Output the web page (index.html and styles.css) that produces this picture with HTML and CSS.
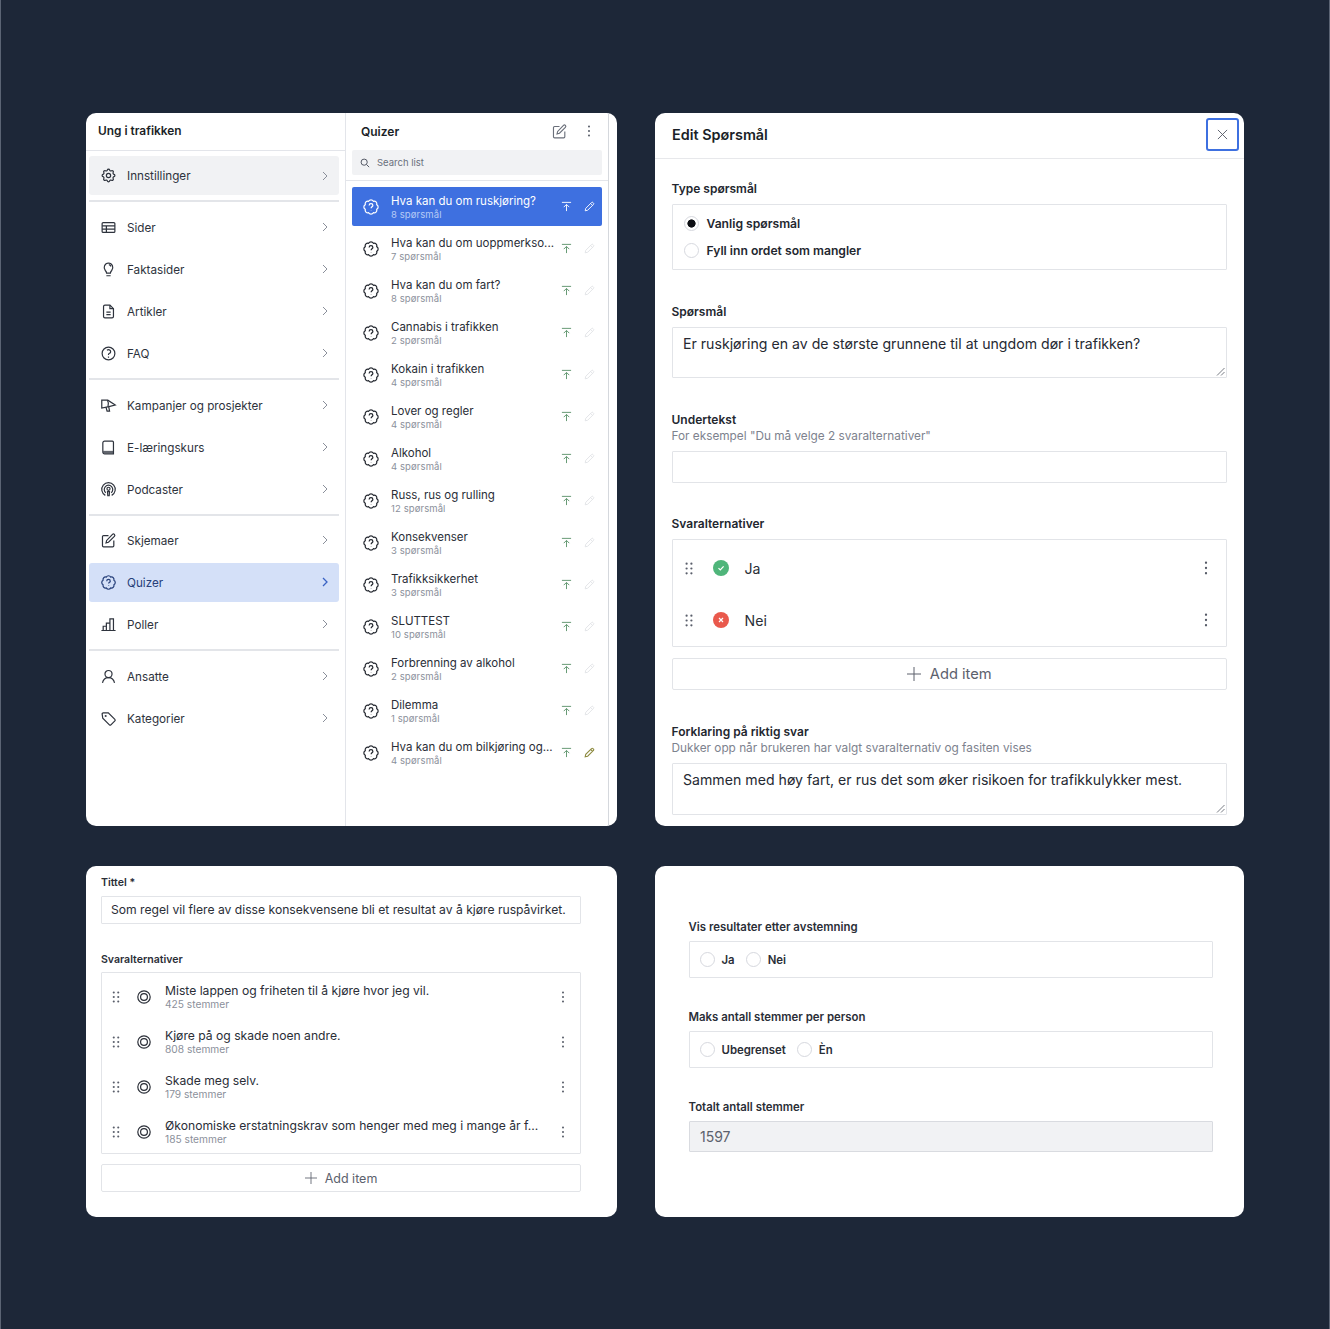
FILE: index.html
```html
<!DOCTYPE html>
<html lang="no">
<head>
<meta charset="utf-8">
<title>Ung i trafikken</title>
<link rel="stylesheet" href="styles.css">
</head>
<body>
<svg class="defs" width="0" height="0" aria-hidden="true">
<symbol id="i-cog" viewBox="0 0 24 24"><path d="M10.325 4.317c.426-1.756 2.924-1.756 3.350 0a1.724 1.724 0 002.573 1.066c1.543-.94 3.310.826 2.370 2.370a1.724 1.724 0 001.065 2.572c1.756.426 1.756 2.924 0 3.350a1.724 1.724 0 00-1.066 2.573c.94 1.543-.826 3.310-2.370 2.370a1.724 1.724 0 00-2.572 1.065c-.426 1.756-2.924 1.756-3.350 0a1.724 1.724 0 00-2.573-1.066c-1.543.94-3.310-.826-2.370-2.370a1.724 1.724 0 00-1.065-2.572c-1.756-.426-1.756-2.924 0-3.350a1.724 1.724 0 001.066-2.573c-.94-1.543.826-3.310 2.370-2.370.996.608 2.296.07 2.572-1.065z"/><circle cx="12" cy="12" r="3"/></symbol>
<symbol id="i-table" viewBox="0 0 24 24"><rect x="3" y="5" width="18" height="14" rx="1.5"/><path d="M3 9.7h18M3 14.3h18M9 9.7V19"/></symbol>
<symbol id="i-bulb" viewBox="0 0 24 24"><path d="M9.3 17.2c0-1.600-.7-2.600-1.800-3.800A6.400 6.400 0 0112 2.800a6.400 6.400 0 014.500 10.600c-1.100 1.200-1.800 2.200-1.800 3.800z"/><path d="M9 20.800h6M12.500 5.200a3.600 3.600 0 013 2.600"/></symbol>
<symbol id="i-doc" viewBox="0 0 24 24"><path d="M14 3H7a2 2 0 00-2 2v14a2 2 0 002 2h10a2 2 0 002-2V8z"/><path d="M14 3v5h5M9 13h6M9 16.500h6"/></symbol>
<symbol id="i-q" viewBox="0 0 24 24"><path d="M9.879 7.519c1.171-1.025 3.071-1.025 4.242 0 1.172 1.025 1.172 2.687 0 3.712-.203.179-.43.326-.67.442-.745.361-1.45.999-1.45 1.827v.75M21 12a9 9 0 11-18 0 9 9 0 0118 0zm-9 5.250h.008v.008H12v-.008z"/></symbol>
<symbol id="i-mega" viewBox="0 0 24 24"><path d="M2.500 4.500h8.500l10.500 6.800-9 2.200-10 2z"/><path d="M8.500 14.500l1.500 5.500h3.500l-1.200-6.300"/><path d="M10.500 4.500c1.500 2.500 1.800 6.300.8 9.300"/></symbol>
<symbol id="i-book" viewBox="0 0 24 24"><path d="M6.500 3h11A1.500 1.500 0 0119 4.500V21H6.500A2.500 2.500 0 014 18.500v-13A2.500 2.500 0 016.500 3z"/><path d="M4.500 18.500h14.500" stroke-width="3.500" opacity=".75"/></symbol>
<symbol id="i-pod" viewBox="0 0 24 24"><path d="M7.500 20.300a9.500 9.500 0 119 0"/><path d="M8.200 16.600a6 6 0 117.600 0"/><circle cx="12" cy="11" r="2.200"/><path d="M10.600 15h2.800l-.4 5.800h-2z"/></symbol>
<symbol id="i-edit" viewBox="0 0 24 24"><path d="M12 5H5a1.500 1.500 0 00-1.500 1.500v13A1.500 1.500 0 005 21h13a1.500 1.500 0 001.500-1.500V12"/><path d="M17.600 3.400a1.900 1.900 0 012.700 2.700L12 14.500l-3.500.9.900-3.500z"/></symbol>
<symbol id="i-bars" viewBox="0 0 24 24"><path d="M2 20.500h20M4.500 20.500v-6h4.500v6M9 20.500V10h5v10.500M14 20.500V4h5v16.500"/></symbol>
<symbol id="i-user" viewBox="0 0 24 24"><circle cx="12" cy="8.500" r="5"/><path d="M3.500 21c.8-4 4-7.500 8.500-7.500s7.700 3.500 8.500 7.500"/></symbol>
<symbol id="i-tag" viewBox="0 0 24 24"><path d="M3 5.500A1.500 1.500 0 014.500 4h7.200l9.300 9.300a1.500 1.500 0 010 2.100l-5.600 5.600a1.500 1.500 0 01-2.100 0L3.900 11.600z"/><circle cx="8" cy="8.500" r=".6"/></symbol>
<symbol id="i-chev" viewBox="0 0 8 12"><path d="M2 2l4 4-4 4"/></symbol>
<symbol id="i-quiz" viewBox="0 0 24 24"><path stroke-linejoin="round" d="M19.580 8.860A3.500 3.500 0 0119.580 15.140 3.500 3.500 0 0115.140 19.580 3.500 3.500 0 018.860 19.580 3.500 3.500 0 014.420 15.140 3.500 3.500 0 014.420 8.860 3.500 3.500 0 018.860 4.420 3.500 3.500 0 0115.140 4.420 3.500 3.500 0 0119.580 8.860z"/><path d="M9.500 10.100a2.500 2.500 0 115 0c0 1.700-2.300 1.700-2.300 3.400M12.200 16.400v.4"/></symbol>
<symbol id="i-top" viewBox="0 0 12 12"><path d="M1 1.500h10M6 11V4M3 6.700L6 3.700l3 3"/></symbol>
<symbol id="i-pen" viewBox="0 0 12 12"><path d="M8.200 1.700a1.100 1.100 0 011.600 0l.5.500a1.100 1.100 0 010 1.600L4 10.100 1.300 10.700 1.900 8zM7.200 2.700l2.100 2.100"/></symbol>
<symbol id="i-search" viewBox="0 0 12 12"><circle cx="5" cy="5" r="3.700"/><path d="M7.800 7.800L11 11"/></symbol>
<symbol id="i-dots" viewBox="0 0 4 16"><circle cx="2" cy="2" r="1.300"/><circle cx="2" cy="8" r="1.300"/><circle cx="2" cy="14" r="1.300"/></symbol>
<symbol id="i-grip" viewBox="0 0 10 16"><circle cx="2" cy="2" r="1.400"/><circle cx="8" cy="2" r="1.400"/><circle cx="2" cy="8" r="1.400"/><circle cx="8" cy="8" r="1.400"/><circle cx="2" cy="14" r="1.400"/><circle cx="8" cy="14" r="1.400"/></symbol>
<symbol id="i-target" viewBox="0 0 14 14"><circle cx="7" cy="7" r="6.200"/><circle cx="7" cy="7" r="3.400"/></symbol>
<symbol id="i-plus" viewBox="0 0 14 14"><path d="M7 0v14M0 7h14"/></symbol>
<symbol id="i-close" viewBox="0 0 12 12"><path d="M1 1l10 10M11 1L1 11"/></symbol>
<symbol id="i-grab" viewBox="0 0 9 9"><path d="M8.500 1L1 8.500M8.500 5L5 8.500"/></symbol>
</svg>

<main class="board">

<section class="card studio">
  <nav class="side">
    <h2 class="pane-title">Ung i trafikken</h2>
    <div class="group group-first">
      <a class="nav nav-muted"><svg class="ico"><use href="#i-cog"/></svg><span>Innstillinger</span><svg class="chev"><use href="#i-chev"/></svg></a>
    </div>
    <div class="group">
      <a class="nav"><svg class="ico"><use href="#i-table"/></svg><span>Sider</span><svg class="chev"><use href="#i-chev"/></svg></a>
      <a class="nav"><svg class="ico"><use href="#i-bulb"/></svg><span>Faktasider</span><svg class="chev"><use href="#i-chev"/></svg></a>
      <a class="nav"><svg class="ico"><use href="#i-doc"/></svg><span>Artikler</span><svg class="chev"><use href="#i-chev"/></svg></a>
      <a class="nav"><svg class="ico"><use href="#i-q"/></svg><span>FAQ</span><svg class="chev"><use href="#i-chev"/></svg></a>
    </div>
    <div class="group group-tight">
      <a class="nav"><svg class="ico"><use href="#i-mega"/></svg><span>Kampanjer og prosjekter</span><svg class="chev"><use href="#i-chev"/></svg></a>
      <a class="nav"><svg class="ico"><use href="#i-book"/></svg><span>E-læringskurs</span><svg class="chev"><use href="#i-chev"/></svg></a>
      <a class="nav"><svg class="ico"><use href="#i-pod"/></svg><span>Podcaster</span><svg class="chev"><use href="#i-chev"/></svg></a>
    </div>
    <div class="group">
      <a class="nav"><svg class="ico"><use href="#i-edit"/></svg><span>Skjemaer</span><svg class="chev"><use href="#i-chev"/></svg></a>
      <a class="nav nav-active"><svg class="ico"><use href="#i-quiz"/></svg><span>Quizer</span><svg class="chev"><use href="#i-chev"/></svg></a>
      <a class="nav"><svg class="ico"><use href="#i-bars"/></svg><span>Poller</span><svg class="chev"><use href="#i-chev"/></svg></a>
    </div>
    <div class="group group-last">
      <a class="nav"><svg class="ico"><use href="#i-user"/></svg><span>Ansatte</span><svg class="chev"><use href="#i-chev"/></svg></a>
      <a class="nav"><svg class="ico"><use href="#i-tag"/></svg><span>Kategorier</span><svg class="chev"><use href="#i-chev"/></svg></a>
    </div>
  </nav>
  <div class="quizzes">
    <header class="list-head">
      <h2 class="pane-title-2">Quizer</h2>
      <svg class="head-edit"><use href="#i-edit"/></svg>
      <svg class="head-dots"><use href="#i-dots"/></svg>
    </header>
    <div class="search-wrap"><div class="search"><svg class="search-ico"><use href="#i-search"/></svg><span>Search list</span></div></div>
    <ul class="qlist">
      <li class="q q-on"><svg class="q-ico"><use href="#i-quiz"/></svg><div class="q-text"><div class="q-t">Hva kan du om ruskjøring?</div><div class="q-s">8 spørsmål</div></div><svg class="q-top"><use href="#i-top"/></svg><svg class="q-pen"><use href="#i-pen"/></svg></li>
      <li class="q"><svg class="q-ico"><use href="#i-quiz"/></svg><div class="q-text"><div class="q-t">Hva kan du om uoppmerkso...</div><div class="q-s">7 spørsmål</div></div><svg class="q-top"><use href="#i-top"/></svg><svg class="q-pen"><use href="#i-pen"/></svg></li>
      <li class="q"><svg class="q-ico"><use href="#i-quiz"/></svg><div class="q-text"><div class="q-t">Hva kan du om fart?</div><div class="q-s">8 spørsmål</div></div><svg class="q-top"><use href="#i-top"/></svg><svg class="q-pen"><use href="#i-pen"/></svg></li>
      <li class="q"><svg class="q-ico"><use href="#i-quiz"/></svg><div class="q-text"><div class="q-t">Cannabis i trafikken</div><div class="q-s">2 spørsmål</div></div><svg class="q-top"><use href="#i-top"/></svg><svg class="q-pen"><use href="#i-pen"/></svg></li>
      <li class="q"><svg class="q-ico"><use href="#i-quiz"/></svg><div class="q-text"><div class="q-t">Kokain i trafikken</div><div class="q-s">4 spørsmål</div></div><svg class="q-top"><use href="#i-top"/></svg><svg class="q-pen"><use href="#i-pen"/></svg></li>
      <li class="q"><svg class="q-ico"><use href="#i-quiz"/></svg><div class="q-text"><div class="q-t">Lover og regler</div><div class="q-s">4 spørsmål</div></div><svg class="q-top"><use href="#i-top"/></svg><svg class="q-pen"><use href="#i-pen"/></svg></li>
      <li class="q"><svg class="q-ico"><use href="#i-quiz"/></svg><div class="q-text"><div class="q-t">Alkohol</div><div class="q-s">4 spørsmål</div></div><svg class="q-top"><use href="#i-top"/></svg><svg class="q-pen"><use href="#i-pen"/></svg></li>
      <li class="q"><svg class="q-ico"><use href="#i-quiz"/></svg><div class="q-text"><div class="q-t">Russ, rus og rulling</div><div class="q-s">12 spørsmål</div></div><svg class="q-top"><use href="#i-top"/></svg><svg class="q-pen"><use href="#i-pen"/></svg></li>
      <li class="q"><svg class="q-ico"><use href="#i-quiz"/></svg><div class="q-text"><div class="q-t">Konsekvenser</div><div class="q-s">3 spørsmål</div></div><svg class="q-top"><use href="#i-top"/></svg><svg class="q-pen"><use href="#i-pen"/></svg></li>
      <li class="q"><svg class="q-ico"><use href="#i-quiz"/></svg><div class="q-text"><div class="q-t">Trafikksikkerhet</div><div class="q-s">3 spørsmål</div></div><svg class="q-top"><use href="#i-top"/></svg><svg class="q-pen"><use href="#i-pen"/></svg></li>
      <li class="q"><svg class="q-ico"><use href="#i-quiz"/></svg><div class="q-text"><div class="q-t">SLUTTEST</div><div class="q-s">10 spørsmål</div></div><svg class="q-top"><use href="#i-top"/></svg><svg class="q-pen"><use href="#i-pen"/></svg></li>
      <li class="q"><svg class="q-ico"><use href="#i-quiz"/></svg><div class="q-text"><div class="q-t">Forbrenning av alkohol</div><div class="q-s">2 spørsmål</div></div><svg class="q-top"><use href="#i-top"/></svg><svg class="q-pen"><use href="#i-pen"/></svg></li>
      <li class="q"><svg class="q-ico"><use href="#i-quiz"/></svg><div class="q-text"><div class="q-t">Dilemma</div><div class="q-s">1 spørsmål</div></div><svg class="q-top"><use href="#i-top"/></svg><svg class="q-pen"><use href="#i-pen"/></svg></li>
      <li class="q q-draft"><svg class="q-ico"><use href="#i-quiz"/></svg><div class="q-text"><div class="q-t">Hva kan du om bilkjøring og...</div><div class="q-s">4 spørsmål</div></div><svg class="q-top"><use href="#i-top"/></svg><svg class="q-pen"><use href="#i-pen"/></svg></li>
    </ul>
  </div>
  <div class="scroll-track"></div>
</section>

<section class="card edit">
  <header class="edit-head">
    <h1>Edit Spørsmål</h1>
    <button class="close"><svg><use href="#i-close"/></svg></button>
  </header>
  <div class="edit-body">
    <div class="lab lab-type">Type spørsmål</div>
    <div class="box type-box">
      <label class="radio-row"><span class="radio radio-on"></span>Vanlig spørsmål</label>
      <label class="radio-row"><span class="radio"></span>Fyll inn ordet som mangler</label>
    </div>
    <div class="lab lab-q">Spørsmål</div>
    <div class="box area area-q">Er ruskjøring en av de største grunnene til at ungdom dør i trafikken?<svg class="grab"><use href="#i-grab"/></svg></div>
    <div class="lab lab-u">Undertekst</div>
    <div class="hint">For eksempel "Du må velge 2 svaralternativer"</div>
    <div class="box empty-input"></div>
    <div class="lab lab-s">Svaralternativer</div>
    <div class="box answers">
      <div class="ans"><svg class="grip"><use href="#i-grip"/></svg><span class="mark mark-yes"><svg viewBox="0 0 10 10"><path d="M2.500 5.200l1.800 1.800 3.300-3.700"/></svg></span><span class="ans-t">Ja</span><svg class="dots"><use href="#i-dots"/></svg></div>
      <div class="ans"><svg class="grip"><use href="#i-grip"/></svg><span class="mark mark-no"><svg viewBox="0 0 10 10"><path d="M3 3l4 4M7 3L3 7"/></svg></span><span class="ans-t">Nei</span><svg class="dots"><use href="#i-dots"/></svg></div>
    </div>
    <div class="add add-lg"><svg><use href="#i-plus"/></svg>Add item</div>
    <div class="lab lab-f">Forklaring på riktig svar</div>
    <div class="hint">Dukker opp når brukeren har valgt svaralternativ og fasiten vises</div>
    <div class="box area area-f">Sammen med høy fart, er rus det som øker risikoen for trafikkulykker mest.<svg class="grab"><use href="#i-grab"/></svg></div>
  </div>
</section>

<section class="card poll">
  <div class="lab-sm">Tittel *</div>
  <div class="box poll-input">Som regel vil flere av disse konsekvensene bli et resultat av å kjøre ruspåvirket.</div>
  <div class="lab-sm lab-poll">Svaralternativer</div>
  <div class="box poll-list">
    <div class="pa"><svg class="pa-grip"><use href="#i-grip"/></svg><svg class="pa-target"><use href="#i-target"/></svg><div class="pa-text"><div class="pa-t">Miste lappen og friheten til å kjøre hvor jeg vil.</div><div class="pa-s">425 stemmer</div></div><svg class="pa-dots"><use href="#i-dots"/></svg></div>
    <div class="pa"><svg class="pa-grip"><use href="#i-grip"/></svg><svg class="pa-target"><use href="#i-target"/></svg><div class="pa-text"><div class="pa-t">Kjøre på og skade noen andre.</div><div class="pa-s">808 stemmer</div></div><svg class="pa-dots"><use href="#i-dots"/></svg></div>
    <div class="pa"><svg class="pa-grip"><use href="#i-grip"/></svg><svg class="pa-target"><use href="#i-target"/></svg><div class="pa-text"><div class="pa-t">Skade meg selv.</div><div class="pa-s">179 stemmer</div></div><svg class="pa-dots"><use href="#i-dots"/></svg></div>
    <div class="pa"><svg class="pa-grip"><use href="#i-grip"/></svg><svg class="pa-target"><use href="#i-target"/></svg><div class="pa-text"><div class="pa-t">Økonomiske erstatningskrav som henger med meg i mange år f...</div><div class="pa-s">185 stemmer</div></div><svg class="pa-dots"><use href="#i-dots"/></svg></div>
  </div>
  <div class="add add-sm"><svg><use href="#i-plus"/></svg>Add item</div>
</section>

<section class="card settings">
  <div class="lab-sm set-lab set-lab-1">Vis resultater etter avstemning</div>
  <div class="box set-box">
    <label class="set-radio"><span class="radio"></span>Ja</label>
    <label class="set-radio"><span class="radio"></span>Nei</label>
  </div>
  <div class="lab-sm set-lab set-lab-2">Maks antall stemmer per person</div>
  <div class="box set-box">
    <label class="set-radio"><span class="radio"></span>Ubegrenset</label>
    <label class="set-radio"><span class="radio"></span>Èn</label>
  </div>
  <div class="lab-sm set-lab set-lab-2">Totalt antall stemmer</div>
  <div class="box set-total">1597</div>
</section>

</main>
</body>
</html>
```

FILE: styles.css
```css
* { box-sizing: border-box; }
html, body { margin: 0; padding: 0; }
body {
  background: #1d2738;
  font-family: Inter, "Liberation Sans", sans-serif;
  color: #1b1f27;
  min-height: 1329px;
  border-left: 1px solid #5b6474;
  border-right: 1px solid #5b6474;
  -webkit-font-smoothing: antialiased;
}
.defs { position: absolute; }
svg { fill: none; stroke: currentColor; flex: none; display: block; }

.board {
  display: grid;
  grid-template-columns: 531px 589px;
  grid-template-rows: 713px 351px;
  column-gap: 38px;
  row-gap: 40px;
  padding: 113px 0 0 85px;
}
.card { background: #fff; border-radius: 10px; overflow: hidden; }

/* first card */
.studio { display: flex; }
.side { width: 260px; border-right: 1px solid #e3e5ea; padding: 0 6px 0 3px; flex: none; }
.pane-title {
  margin: 0 -6px 0 -3px;
  height: 38px;
  padding: 0 12px;
  font-size: 11.900px;
  font-weight: 600;
  line-height: 36px;
  border-bottom: 1px solid #e3e5ea;
}
.group { border-bottom: 2px solid #e3e5e9; padding: 0 0 4px; margin-bottom: 4px; }
.group-first { padding: 5px 0 5px; margin-bottom: 4px; }
.group-tight { margin-bottom: 3px; }
.group-last { border-bottom: 0; }
.group:not(.group-first) { padding-top: 0; }
.nav {
  display: flex;
  align-items: center;
  height: 42px;
  padding: 0 10px 0 11px;
  font-size: 11.700px;
  color: #2e333d;
  border-radius: 3px;
}
.nav-muted { height: 39px; background: #f1f2f4; }
.nav-active { height: 39px; margin: 1.500px 0; background: #d4e0f8; color: #27407a; }
.ico { width: 17px; height: 17px; stroke-width: 1.700; margin-right: 10px; }
.nav span { flex: 1; padding-top: 1px; }
.chev { width: 8px; height: 12px; color: #8a8f9a; stroke-width: 1; }
.nav-active .chev { color: #3a63c4; stroke-width: 1.300; }

.quizzes { width: 262px; flex: none; }
.list-head { display: flex; align-items: center; height: 36px; padding: 0 17px 0 15px; }
.pane-title-2 { margin: 0; font-size: 12px; font-weight: 600; flex: 1; }
.head-edit { width: 17px; height: 17px; color: #6a6f7a; stroke-width: 1.600; margin-right: 19px; }
.head-dots { width: 4px; height: 12px; fill: #555a66; stroke: none; }
.search-wrap { padding: 1px 6px 6px; border-bottom: 1px solid #e3e5ea; height: 32px; }
.search {
  height: 25px;
  background: #f1f2f4;
  border-radius: 2px;
  display: flex;
  align-items: center;
  padding: 0 8px;
  font-size: 9.500px;
  color: #6a707c;
}
.search-ico { width: 10px; height: 10px; margin-right: 7px; color: #555a66; stroke-width: 1.200; }
.qlist { list-style: none; margin: 6px 0 0; padding: 0 6px; }
.q { display: flex; align-items: center; height: 39px; margin-bottom: 3px; padding: 1px 7px 0 10px; border-radius: 2px; }
.q-ico { width: 18px; height: 18px; stroke-width: 1.600; margin-right: 11px; color: #23272f; }
.q-text { flex: 1; min-width: 0; }
.q-t { font-size: 11.500px; line-height: 14px; white-space: nowrap; color: #2a2e37; }
.q-s { font-size: 9.500px; line-height: 13px; color: #8b909b; letter-spacing: .1px; }
.q-top { width: 11px; height: 11px; color: #5a9269; stroke-width: 1; margin-right: 12px; margin-top: -1px; }
.q-pen { width: 11px; height: 11px; color: #e0e2e6; stroke-width: 1; margin-top: -1px; }
.q-on { background: #3e70e0; }
.q-on .q-ico, .q-on .q-t, .q-on .q-top, .q-on .q-pen { color: #fff; }
.q-on .q-s { color: #b7cbf5; }
.q-draft .q-pen { color: #8d8a3f; stroke-width: 1.200; }
.scroll-track { flex: 1; border-left: 1px solid #d5d8dd; }

/* modal */
.edit-head {
  display: flex;
  align-items: center;
  height: 46px;
  padding: 0 5px 2px 17px;
  border-bottom: 1px solid #e7e8eb;
}
.edit-head h1 { margin: 0; flex: 1; font-size: 14.400px; font-weight: 600; }
.close {
  width: 33px;
  height: 33px;
  padding: 0;
  border: 2px solid #3e70e0;
  border-radius: 3px;
  background: #fff;
  color: #555a66;
  display: flex;
  align-items: center;
  justify-content: center;
}
.close svg { width: 11px; height: 11px; stroke-width: 1; }
.edit-body { padding: 0 17px 0 16.500px; }
.box { border: 1px solid #e2e4e8; border-radius: 1px; }
.lab { font-size: 12px; font-weight: 600; line-height: 14px; color: #23272f; }
.lab-type { margin-top: 23px; margin-bottom: 8px; }
.lab-q { margin-top: 35px; margin-bottom: 8px; }
.lab-u { margin-top: 35px; margin-bottom: 2px; }
.lab-s { margin-top: 34px; margin-bottom: 8px; }
.lab-f { margin-top: 35px; margin-bottom: 2px; }
.hint { font-size: 11.800px; line-height: 15px; color: #7d828e; margin-bottom: 7px; }
.type-box { height: 66px; padding: 5px 11px; }
.radio-row { display: flex; align-items: center; height: 27px; font-size: 12.150px; font-weight: 600; color: #23272f; }
.radio {
  width: 15px;
  height: 15px;
  border: 1px solid #d6d8de;
  border-radius: 50%;
  flex: none;
  margin-right: 8px;
  background: #fff;
}
.radio-on { background: radial-gradient(circle, #0d0f14 0 3.800px, #fff 4.400px); }
.area { position: relative; padding: 7px 10.500px; font-size: 14.130px; line-height: 17px; color: #262a33; }
.area-q { height: 51px; }
.area-f { height: 52px; }
.grab { position: absolute; right: 1px; bottom: 1px; width: 9px; height: 9px; stroke-width: .8; color: #555a66; }
.empty-input { height: 32px; }
.answers { height: 108px; padding: 2px 0; }
.ans { display: flex; align-items: center; height: 52px; padding: 0 18px 0 12px; font-size: 14.130px; }
.grip { width: 8px; height: 13px; fill: #5a5f6b; stroke: none; margin-right: 20px; }
.mark { width: 16px; height: 16px; border-radius: 50%; display: flex; align-items: center; justify-content: center; margin-right: 16px; }
.mark svg { width: 10px; height: 10px; color: #fff; stroke-width: 1.200; }
.mark-yes { background: #4fb57a; }
.mark-no { background: #e9594c; }
.ans-t { flex: 1; color: #2a2e37; }
.dots { width: 4px; height: 14px; fill: #555a66; stroke: none; }
.add {
  display: flex;
  align-items: center;
  justify-content: center;
  border: 1px solid #e2e4e8;
  border-radius: 2px;
  color: #5c616d;
}
.add svg { stroke-width: 1; }
.add-lg { height: 32px; margin-top: 11px; font-size: 14.700px; }
.add-lg svg { width: 14px; height: 14px; margin-right: 9px; }

/* poll */
.poll { padding: 10px 36px 0 15px; }
.lab-sm { font-size: 10.550px; font-weight: 600; line-height: 13px; color: #2a2e37; }
.poll-input { height: 28px; margin-top: 7px; padding: 0 9px; font-size: 12.150px; line-height: 26px; color: #2a2e37; white-space: nowrap; }
.lab-poll { margin-top: 29px; margin-bottom: 6px; }
.poll-list { height: 182px; padding: 1px 0; }
.pa { display: flex; align-items: center; height: 45px; padding: 0 15px 0 10px; }
.pa-grip { width: 8px; height: 12px; fill: #5a5f6b; stroke: none; margin-right: 17px; }
.pa-target { width: 14px; height: 14px; color: #2a2e37; stroke-width: 1.200; margin-right: 14px; }
.pa-text { flex: 1; min-width: 0; }
.pa-t { font-size: 12.150px; line-height: 15px; color: #2a2e37; white-space: nowrap; }
.pa-s { font-size: 10.200px; line-height: 13px; color: #8b909b; }
.pa-dots { width: 4px; height: 12px; fill: #555a66; stroke: none; }
.add-sm { height: 28px; margin-top: 10px; font-size: 12.500px; }
.add-sm svg { width: 12px; height: 12px; margin-right: 8px; }

/* settings */
.settings { padding: 55px 31px 0 33.500px; }
.set-lab { font-size: 11.400px; }
.set-lab-1 { margin-bottom: 7px; }
.set-lab-2 { margin-top: 33px; margin-bottom: 7px; }
.set-box { height: 37px; display: flex; align-items: center; padding: 0 10px; gap: 11px; }
.set-radio { display: flex; align-items: center; font-size: 11.400px; font-weight: 600; color: #2a2e37; }
.set-radio .radio { margin-right: 7px; }
.set-total { height: 31px; background: #f1f2f4; border-color: #d9dbe0; font-size: 14px; line-height: 29px; padding: 0 10.500px; color: #5c616d; }
```
